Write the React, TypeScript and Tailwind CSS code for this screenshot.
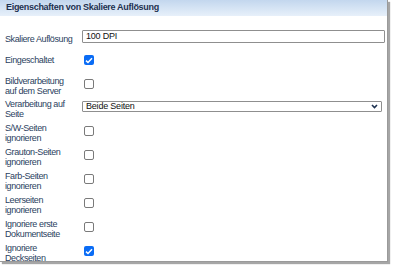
import React from "react";

const font = { fontFamily: '"Liberation Sans", Arial, sans-serif' };

function Check({ checked }: { checked?: boolean }) {
  if (checked) {
    return (
      <div className="w-[10px] h-[10px] rounded-[2px] bg-[#0a6cf5] flex items-center justify-center">
        <svg width="8" height="7" viewBox="0 0 8 7">
          <path d="M1 3.6 L3 5.5 L7 1.2" stroke="white" strokeWidth="1.5" fill="none" />
        </svg>
      </div>
    );
  }
  return <div className="w-[10px] h-[10px] rounded-[2px] border border-[#7a7a7a] bg-white" />;
}

const labelCls = "pl-[5px] text-[9px] leading-[10px] tracking-[-0.4px] text-[#2b4160]";

function Row({ lines, children, mt }: { lines: string[]; children: React.ReactNode; mt: string }) {
  return (
    <div className={`flex items-start ${mt}`}>
      <div className={`w-[79px] shrink-0 ${labelCls}`}>
        {lines.map((l) => (
          <div key={l}>{l}</div>
        ))}
      </div>
      <div className="flex-1 pt-[3px] pl-[5px]">{children}</div>
    </div>
  );
}

export default function App() {
  return (
    <div className="w-[394px] h-[268px] bg-white" style={font}>
      <div className="w-[388px] h-[262px] border-r border-b border-[#9a9a9a] shadow-[2px_2px_1px_rgba(0,0,0,0.35)] overflow-hidden bg-white">
        <div className="h-[16px] bg-gradient-to-b from-[#c3d7ee] to-[#e7f0fa] pl-[6px] flex items-center">
          <span className="text-[9px] font-bold tracking-[-0.3px] text-[#1d3150]">Eigenschaften von Skaliere Auflösung</span>
        </div>
        <div className="flex items-center mt-[13px]">
          <div className={`w-[82px] pt-[5px] ${labelCls}`}>Skaliere Auflösung</div>
          <div className="w-[303px] h-[13px] border border-[#8f8f8f] rounded-[1px] text-[9px] leading-[11px] tracking-[-0.2px] pl-[3px] text-[#111]">100 DPI</div>
        </div>
        <div className="flex items-center mt-[11px]">
          <div className={`w-[84px] ${labelCls}`}>Eingeschaltet</div>
          <Check checked />
        </div>
        <Row lines={["Bildverarbeitung", "auf dem Server"]} mt="mt-[11px]">
          <Check />
        </Row>
        <div className="flex items-start mt-[3px]">
          <div className={`w-[82px] shrink-0 ${labelCls}`}>
            <div>Verarbeitung auf</div>
            <div>Seite</div>
          </div>
          <div className="w-[300px] h-[11px] border border-[#8f8f8f] rounded-[1px] flex items-center justify-between pl-[3px] pr-[3px] mt-[2px]">
            <span className="text-[9px] leading-[9px] tracking-[-0.2px] text-[#111]">Beide Seiten</span>
            <svg width="7" height="5" viewBox="0 0 7 5">
              <path d="M1 1 L3.5 3.5 L6 1" stroke="#1d3150" strokeWidth="1.6" fill="none" />
            </svg>
          </div>
        </div>
        <Row lines={["S/W-Seiten", "ignorieren"]} mt="mt-[4px]">
          <Check />
        </Row>
        <Row lines={["Grauton-Seiten", "ignorieren"]} mt="mt-[4px]">
          <Check />
        </Row>
        <Row lines={["Farb-Seiten", "ignorieren"]} mt="mt-[4px]">
          <Check />
        </Row>
        <Row lines={["Leerseiten", "ignorieren"]} mt="mt-[4px]">
          <Check />
        </Row>
        <Row lines={["Ignoriere erste", "Dokumentseite"]} mt="mt-[4px]">
          <Check />
        </Row>
        <Row lines={["Ignoriere", "Deckseiten"]} mt="mt-[4px]">
          <Check checked />
        </Row>
      </div>
    </div>
  );
}
